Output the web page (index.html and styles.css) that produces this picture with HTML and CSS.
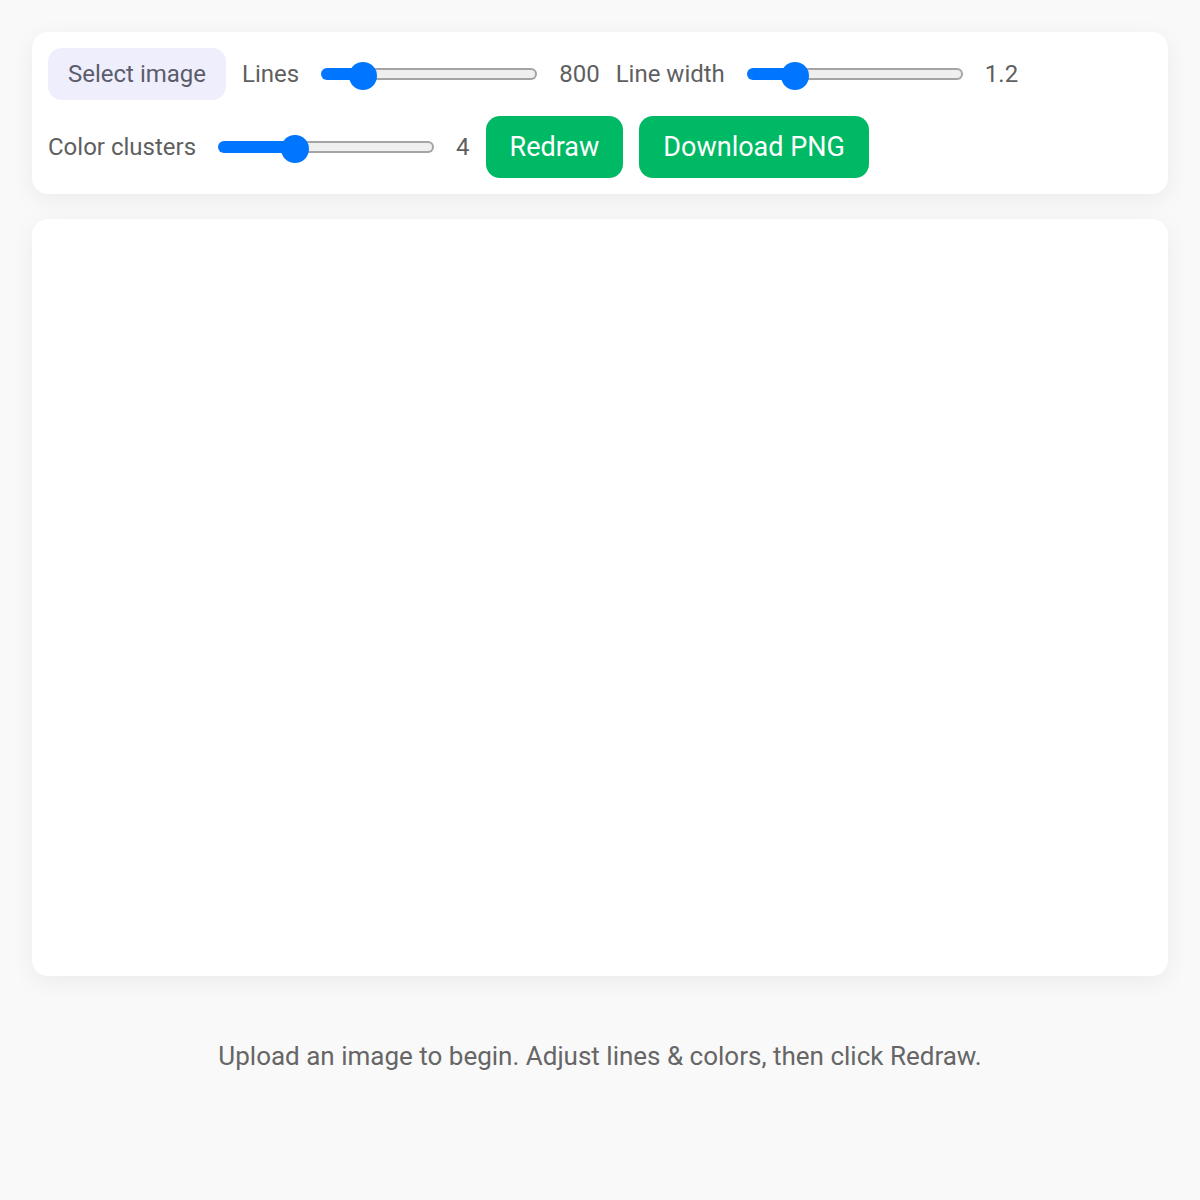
FILE: index.html
```html
<!DOCTYPE html>
<html lang="en">
<head>
    <meta charset="UTF-8">
    <meta name="viewport" content="width=device-width, initial-scale=1.0">
    <title>Line Portrait</title>
    <link rel="stylesheet" href="styles.css">
</head>
<body>
    <div class="controls">
        <label class="fileButton" for="fileInput">Select image</label>
        <input id="fileInput" class="hidden" type="file" accept="image/*">

        <span class="label">Lines</span>
        <input id="lines" class="slider" type="range" min="100" max="5000" step="50" value="800">
        <span id="linesValue" class="value">800</span>

        <span class="label">Line width</span>
        <input id="lineWidth" class="slider" type="range" min="0.2" max="6" step="0.1" value="1.2">
        <span id="lineWidthValue" class="value">1.2</span>

        <span class="label">Color clusters</span>
        <input id="clusters" class="slider" type="range" min="2" max="8" step="1" value="4">
        <span id="clustersValue" class="value">4</span>

        <button id="redraw" class="action">Redraw</button>
        <button id="download" class="action">Download PNG</button>
    </div>

    <div class="stage">
        <canvas id="output"></canvas>
    </div>

    <p id="status" class="status">Upload an image to begin. Adjust lines &amp; colors, then click Redraw.</p>

    <script>
        // keep the blue part of each slider under its thumb and echo the value
        function syncSlider(slider) {
            const min = parseFloat(slider.min);
            const max = parseFloat(slider.max);
            const p = (parseFloat(slider.value) - min) / (max - min);
            const thumb = 28;
            const fill = thumb / 2 + p * (slider.offsetWidth - thumb);
            slider.style.setProperty('--fill', fill + 'px');
            document.getElementById(slider.id + 'Value').textContent = slider.value;
        }

        document.querySelectorAll('.slider').forEach(slider => {
            syncSlider(slider);
            slider.addEventListener('input', () => syncSlider(slider));
        });
    </script>
</body>
</html>
```

FILE: styles.css
```css
body {
    font-family: Roboto, "Noto Sans", "Liberation Sans", sans-serif;
    background-color: #f9f9f9;
    color: #5f5f5f;
    margin: 0;
    padding: 32px;
}

.hidden {
    display: none;
}

.controls {
    display: flex;
    flex-wrap: wrap;
    align-items: center;
    gap: 16px;
    padding: 16px;
    background-color: #fff;
    border-radius: 16px;
    box-shadow: 0 6px 24px rgba(0, 0, 0, 0.06);
}

.fileButton {
    font-size: 24px;
    line-height: 28px;
    padding: 12px 20px;
    color: #5c5c6b;
    background-color: #eeeefd;
    border-radius: 14px;
    cursor: pointer;
}

.label,
.value {
    font-size: 24px;
    line-height: 28px;
}

.slider {
    -webkit-appearance: none;
    appearance: none;
    width: 216px;
    height: 28px;
    margin: 0 6px;
    background: transparent;
    cursor: pointer;
}

.slider::-webkit-slider-runnable-track {
    height: 12px;
    border: 2px solid transparent;
    border-radius: 8px;
    background:
        linear-gradient(#0075ff, #0075ff) left top / var(--fill, 0) 100% no-repeat border-box,
        linear-gradient(#efefef, #efefef) padding-box,
        linear-gradient(#a4a4a4, #a4a4a4) border-box;
}

.slider::-webkit-slider-thumb {
    -webkit-appearance: none;
    width: 28px;
    height: 28px;
    margin-top: -8px;
    border-radius: 50%;
    background-color: #0075ff;
}

.action {
    font-family: inherit;
    font-size: 27px;
    line-height: 30px;
    padding: 16px 24px;
    color: #fff;
    background-color: #00b964;
    border: none;
    border-radius: 14px;
    cursor: pointer;
}

.stage {
    margin-top: 25px;
    height: 757px;
    background-color: #fff;
    border-radius: 16px;
    box-shadow: 0 6px 24px rgba(0, 0, 0, 0.06);
    overflow: hidden;
}

.stage canvas {
    display: block;
    width: 100%;
    height: 100%;
}

.status {
    margin: 64px 0 0;
    text-align: center;
    font-size: 26px;
    line-height: 32px;
    color: #666;
}
```
